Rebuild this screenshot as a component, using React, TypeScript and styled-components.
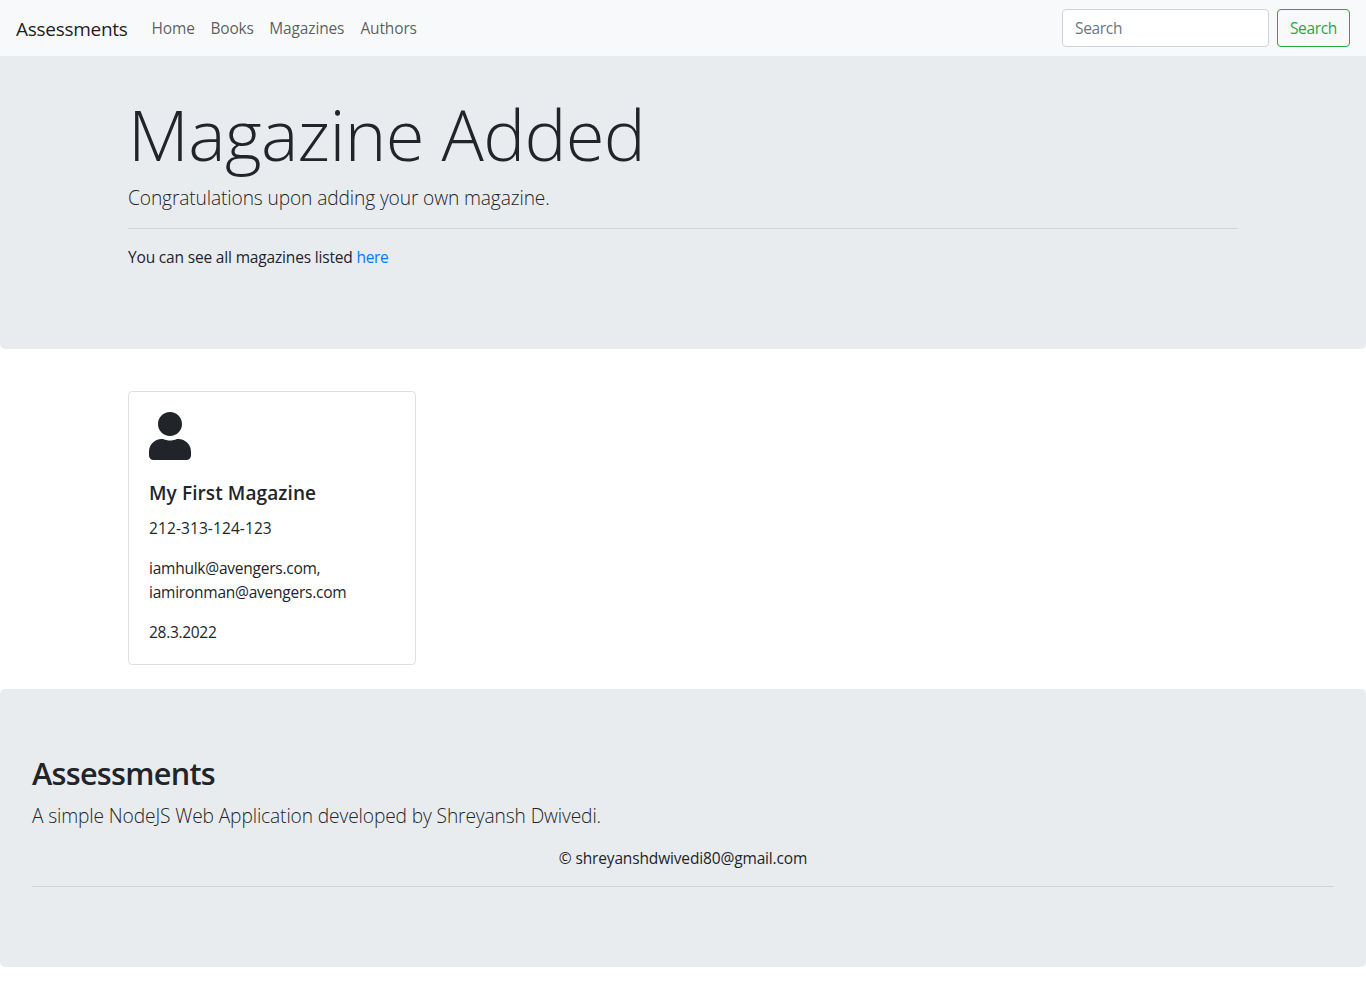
import React from "react";
import styled, { createGlobalStyle } from "styled-components";
import { FaUser } from "react-icons/fa";

const GlobalStyle = createGlobalStyle`
  *, *::before, *::after { box-sizing: border-box; }
  body {
    margin: 0;
    background: #fff;
    color: #212529;
    font-family: "Open Sans", "Noto Sans", sans-serif;
    font-size: 15.5px;
    line-height: 24px;
    letter-spacing: -0.15px;
  }
  h1, h2, h5, p { margin: 0; }
`;

const Navbar = styled.nav`
  display: flex;
  align-items: center;
  height: 56px;
  padding: 0 16px;
  background: #f8f9fa;
`;

const Brand = styled.a`
  width: 111.5px;
  margin-right: 16px;
  padding-top: 1px;
  font-size: 19px;
  line-height: 30px;
  letter-spacing: -0.28px;
  white-space: nowrap;
  color: rgba(0, 0, 0, 0.9);
`;

const NavList = styled.div`
  display: flex;
  flex: 1;
`;

const NavLink = styled.a<{ $width: number }>`
  box-sizing: content-box;
  width: ${(p) => p.$width}px;
  padding: 8px;
  white-space: nowrap;
  color: rgba(0, 0, 0, 0.65);
`;

const SearchForm = styled.form`
  display: flex;
  gap: 8px;
`;

const SearchInput = styled.input`
  width: 207px;
  height: 38px;
  padding: 6px 12px;
  border: 1px solid #ced4da;
  border-radius: 4px;
  background: #fff;
  font: inherit;
  letter-spacing: -0.33px;
  &::placeholder { color: #6c757d; opacity: 1; }
`;

const SearchButton = styled.button`
  width: 73px;
  height: 38px;
  padding: 6px 11px;
  border: 1px solid #28a745;
  border-radius: 4px;
  background: transparent;
  color: #28a745;
  font: inherit;
  letter-spacing: -0.33px;
`;

const Hero = styled.header`
  height: 293px;
  padding-top: 32px;
  background: #e9ecef;
  border-radius: 0 0 5px 5px;
`;

const Container = styled.div`
  width: 1140px;
  margin: 0 auto;
  padding: 0 15px;
`;

const Title = styled.h1`
  margin-bottom: 8px;
  padding-top: 6px;
  font-size: 70.5px;
  font-weight: 300;
  line-height: 80.4px;
  letter-spacing: -0.65px;
`;

const Lead = styled.p`
  padding-top: 2px;
  font-size: 19.2px;
  font-weight: 300;
  line-height: 28px;
  letter-spacing: -0.13px;
`;

const Rule = styled.hr`
  margin: 16px 0;
  border: 0;
  border-top: 1px solid rgba(0, 0, 0, 0.1);
`;

const Text = styled.p<{ $spacing?: number }>`
  letter-spacing: ${(p) => p.$spacing ?? -0.17}px;
`;

const Link = styled.a`
  color: #007bff;
  letter-spacing: -0.35px;
`;

const Card = styled.article`
  display: flex;
  flex-direction: column;
  gap: 16px;
  width: 288px;
  height: 274px;
  margin: 42px 0 24px;
  padding: 20px;
  border: 1px solid rgba(0, 0, 0, 0.125);
  border-radius: 4px;
`;

const UserIcon = styled(FaUser)`
  display: block;
  flex: none;
  width: 42px;
  height: 48px;
`;

const CardTitle = styled.h5`
  margin: 5px 0 -5px;
  font-size: 19px;
  font-weight: 600;
  line-height: 24px;
  letter-spacing: 0.1px;
`;

const Footer = styled.footer`
  height: 278px;
  padding: 65px 32px 0;
  background: #e9ecef;
  border-radius: 5px;
`;

const FooterTitle = styled.h2`
  margin-bottom: 8px;
  font-size: 30.6px;
  font-weight: 600;
  line-height: 38.4px;
  letter-spacing: -0.7px;
`;

const Copyright = styled.p`
  margin-top: 16px;
  letter-spacing: -0.15px;
  text-align: center;
`;

const links = [
  { label: "Home", width: 42.9 },
  { label: "Books", width: 42.9 },
  { label: "Magazines", width: 75.2 },
  { label: "Authors", width: 55.5 },
];

export default function App() {
  return (
    <>
      <GlobalStyle />
      <Navbar>
        <Brand>Assessments</Brand>
        <NavList>
          {links.map((l) => (
            <NavLink key={l.label} $width={l.width}>{l.label}</NavLink>
          ))}
        </NavList>
        <SearchForm>
          <SearchInput placeholder="Search" />
          <SearchButton type="button">Search</SearchButton>
        </SearchForm>
      </Navbar>
      <Hero>
        <Container>
          <Title>Magazine Added</Title>
          <Lead>Congratulations upon adding your own magazine.</Lead>
          <Rule />
          <Text>You can see all magazines listed <Link>here</Link></Text>
        </Container>
      </Hero>
      <Container>
        <Card>
          <UserIcon />
          <CardTitle>My First Magazine</CardTitle>
          <Text $spacing={0.1}>212-313-124-123</Text>
          <Text $spacing={-0.24}>iamhulk@avengers.com, iamironman@avengers.com</Text>
          <Text $spacing={-0.3}>28.3.2022</Text>
        </Card>
      </Container>
      <Footer>
        <FooterTitle>Assessments</FooterTitle>
        <Lead>A simple NodeJS Web Application developed by Shreyansh Dwivedi.</Lead>
        <Copyright>© shreyanshdwivedi80@gmail.com</Copyright>
        <Rule />
      </Footer>
    </>
  );
}
